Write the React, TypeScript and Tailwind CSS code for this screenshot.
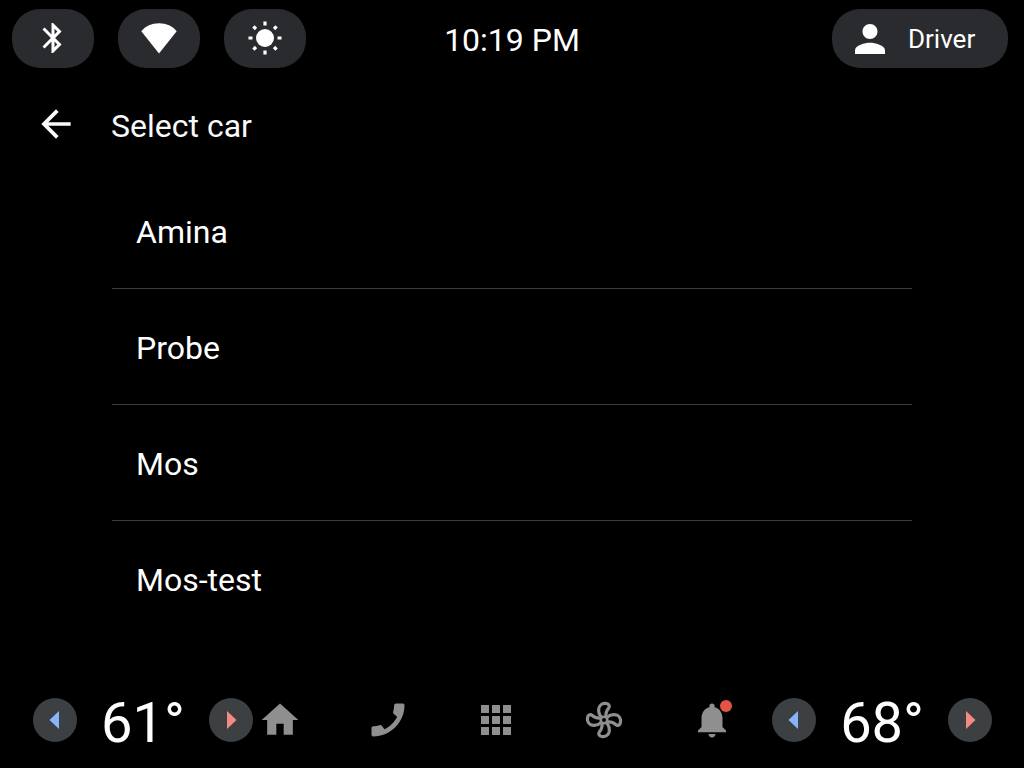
import type { ReactNode } from "react";

const cars = ["Amina", "Probe", "Mos", "Mos-test"];

function StatusPill({ label, children }: { label: string; children: ReactNode }) {
  return (
    <button
      type="button"
      aria-label={label}
      className="flex h-[59px] w-[82px] items-center justify-center rounded-[28px] bg-[#2a2b2e] pb-px"
    >
      {children}
    </button>
  );
}

function BluetoothIcon() {
  return (
    <svg viewBox="0 0 24 24" className="size-9 fill-white" aria-hidden="true">
      <path d="M17.71 7.71L12 2h-1v7.59L6.41 5 5 6.41 10.59 12 5 17.59 6.41 19 11 14.41V22h1l5.71-5.71-4.3-4.29 4.3-4.29zM13 5.83l1.88 1.88L13 9.59V5.83zm1.88 10.46L13 18.17v-3.76l1.88 1.88z" />
    </svg>
  );
}

function WifiIcon() {
  return (
    <svg viewBox="0 0 36 36" className="size-9 fill-white" aria-hidden="true">
      <path d="M18 33.400L0.300 11.300C4.400 6.200 10.600 3.300 18 3.300s13.600 2.900 17.700 8z" />
    </svg>
  );
}

function SunIcon() {
  return (
    <svg viewBox="-18 -18 36 36" className="size-9" aria-hidden="true">
      <circle r="9" className="fill-white" />
      <g className="stroke-white" strokeWidth="3.2">
        <path d="M0-16.500v4M0 16.500v-4M-16.500 0h4M16.500 0h-4" />
        <path d="M-11.600-11.600l2.600 2.600M11.600-11.600l-2.600 2.600M-11.600 11.600l2.600-2.600M11.600 11.600l-2.600-2.600" />
      </g>
    </svg>
  );
}

function PersonIcon() {
  return (
    <svg viewBox="4 4 16 16" className="size-[30px] fill-white" aria-hidden="true">
      <path d="M12 12c2.210 0 4-1.790 4-4s-1.790-4-4-4-4 1.790-4 4 1.790 4 4 4zm0 2c-2.670 0-8 1.340-8 4v2h16v-2c0-2.660-5.330-4-8-4z" />
    </svg>
  );
}

function BackIcon() {
  return (
    <svg viewBox="0 0 24 24" className="size-11 fill-[#f8f9fa]" aria-hidden="true">
      <path d="M20 11H7.830l5.590-5.590L12 4l-8 8 8 8 1.410-1.410L7.830 13H20v-2z" />
    </svg>
  );
}

function HomeIcon() {
  return (
    <svg viewBox="0 0 24 24" className="size-11 fill-current" aria-hidden="true">
      <path d="M10 20v-6h4v6h5v-8h3L12 3 2 12h3v8z" />
    </svg>
  );
}

function PhoneIcon() {
  return (
    <svg viewBox="0 0 24 24" className="size-11 fill-current" aria-hidden="true">
      <path
        transform="matrix(-1 0 0 1 24 0)"
        d="M20.010 15.380c-1.230 0-2.420-.2-3.530-.56-.35-.12-.74-.03-1.010.24l-1.570 1.970c-2.830-1.350-5.480-3.900-6.890-6.830l1.950-1.660c.27-.28.35-.67.24-1.020-.37-1.110-.56-2.300-.56-3.530 0-.54-.45-.99-.99-.99H4.190C3.650 3 3 3.240 3 3.990 3 13.280 10.730 21 20.010 21c.71 0 .99-.63.99-1.180v-3.450c0-.54-.45-.99-.99-.99z"
      />
    </svg>
  );
}

function AppsIcon() {
  return (
    <svg viewBox="0 0 44 44" className="size-11 fill-current" aria-hidden="true">
      <path d="M7 7h8v8H7zM18 7h8v8h-8zM29 7h8v8h-8zM7 18h8v8H7zM18 18h8v8h-8zM29 18h8v8h-8zM7 29h8v8H7zM18 29h8v8h-8zM29 29h8v8h-8z" />
    </svg>
  );
}

const blade = "M-2.600-3C-4.600-5.200-5.700-8.200-5.200-11.600C-4.500-15.200-1.400-16.800 1.600-16.600C5.200-16.300 6.300-13.800 4.500-11.700C2.500-9.500 1.500-7.600 2-3";

function FanIcon() {
  return (
    <svg viewBox="-22 -22 44 44" className="size-11 fill-none stroke-current" strokeWidth="3.200" aria-hidden="true">
      <circle r="3.300" strokeWidth="2.600" />
      <path d={blade} />
      <path d={blade} transform="rotate(90)" />
      <path d={blade} transform="rotate(180)" />
      <path d={blade} transform="rotate(270)" />
    </svg>
  );
}

function BellIcon() {
  return (
    <svg viewBox="0 0 24 24" className="size-[42px] fill-current" aria-hidden="true">
      <path d="M12 22c1.100 0 2-.9 2-2h-4c0 1.100.89 2 2 2zm6-6v-5c0-3.070-1.640-5.640-4.500-6.320V4c0-.83-.67-1.500-1.500-1.500s-1.500.67-1.500 1.500v.68C7.630 5.360 6 7.920 6 11v5l-2 2v1h16v-1l-2-2z" />
    </svg>
  );
}

function TempButton({ label, warmer }: { label: string; warmer?: boolean }) {
  return (
    <button
      type="button"
      aria-label={label}
      className="flex size-11 items-center justify-center rounded-full bg-[#3c4043]"
    >
      <svg viewBox="0 0 44 44" className="size-11" aria-hidden="true">
        {warmer ? (
          <path d="M18 13v18l9.500-9z" className="fill-[#f28b82]" />
        ) : (
          <path d="M26 13v18l-9.500-9z" className="fill-[#8ab4f8]" />
        )}
      </svg>
    </button>
  );
}

function Temperature({ side, value }: { side: string; value: number }) {
  return (
    <section aria-label={`${side} temperature`} className="flex items-center gap-6">
      <TempButton label={`${side} cooler`} />
      <span className="pt-1.5 text-[56px] leading-[64px] text-white">{value}°</span>
      <TempButton label={`${side} warmer`} warmer />
    </section>
  );
}

function NavButton({ label, children }: { label: string; children: ReactNode }) {
  return (
    <button type="button" aria-label={label} className="relative flex size-11 items-center justify-center">
      {children}
    </button>
  );
}

export default function App() {
  return (
    <div className="flex min-h-screen flex-col bg-black font-[Roboto,sans-serif] text-white">
      <header className="grid grid-cols-[1fr_auto_1fr] items-center px-3 pt-[9px]">
        <div className="flex gap-6">
          <StatusPill label="Bluetooth">
            <BluetoothIcon />
          </StatusPill>
          <StatusPill label="Wi-Fi">
            <WifiIcon />
          </StatusPill>
          <StatusPill label="Brightness">
            <SunIcon />
          </StatusPill>
        </div>
        <time className="pt-0.5 text-[32px] leading-10">10:19 PM</time>
        <button
          type="button"
          className="mr-1 flex h-[59px] w-44 items-center gap-[23px] justify-self-end rounded-[28px] bg-[#2a2b2e] pl-[23px] text-[26px]"
        >
          <PersonIcon />
          <span className="pt-0.5">Driver</span>
        </button>
      </header>

      <main className="flex-1">
        <div className="flex h-[105px] items-center gap-[33px] pt-1.5 pl-[34px] text-[#f8f9fa]">
          <button type="button" aria-label="Back">
            <BackIcon />
          </button>
          <h1 className="pt-1 text-[32px] leading-10">Select car</h1>
        </div>
        <ul className="mx-28 divide-y divide-[#3a3b3d]">
          {cars.map((car) => (
            <li key={car}>
              <button type="button" className="flex h-[115px] w-full items-center px-6 pt-0.5 text-left text-[32px]">
                {car}
              </button>
            </li>
          ))}
        </ul>
      </main>

      <footer className="flex h-24 items-center pr-8 pl-[33px]">
        <Temperature side="Driver" value={61} />
        <nav className="mr-[38px] ml-[5px] flex flex-1 items-center justify-between text-[#8f8f8f]">
          <NavButton label="Home">
            <HomeIcon />
          </NavButton>
          <NavButton label="Phone">
            <PhoneIcon />
          </NavButton>
          <NavButton label="Apps">
            <AppsIcon />
          </NavButton>
          <NavButton label="Climate">
            <FanIcon />
          </NavButton>
          <NavButton label="Notifications">
            <BellIcon />
            <span className="absolute top-0.5 right-0.5 size-3 rounded-full bg-[#e65245]" />
          </NavButton>
        </nav>
        <Temperature side="Passenger" value={68} />
      </footer>
    </div>
  );
}
